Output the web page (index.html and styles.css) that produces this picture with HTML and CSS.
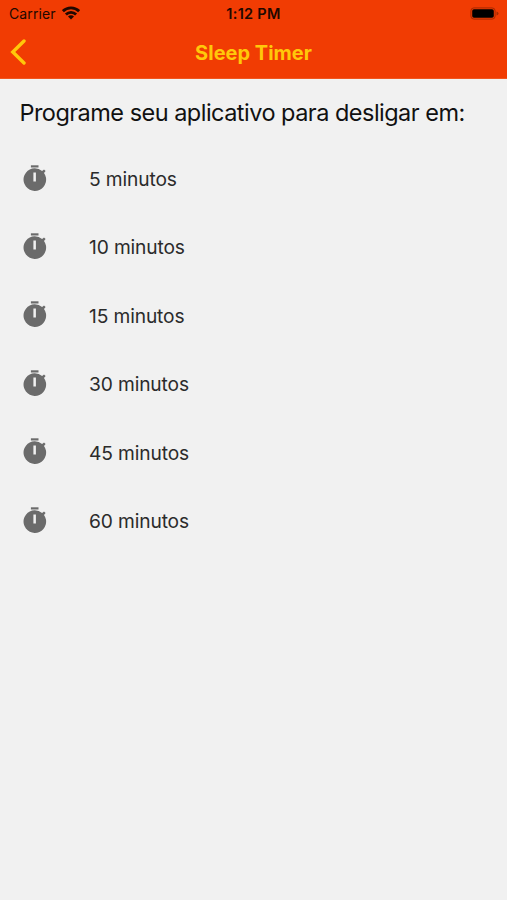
FILE: index.html
```html
<!DOCTYPE html>
<html lang="pt-BR">
<head>
<meta charset="utf-8">
<title>Sleep Timer</title>
<link rel="stylesheet" href="styles.css">
</head>
<body>
<svg class="defs" width="0" height="0" aria-hidden="true">
  <symbol id="stopwatch" viewBox="0 0 24 27">
    <path d="M7.9.3h7.6v2.2H7.9z"/>
    <path fill-rule="evenodd" d="M11.6 3.3a11.2 11.2 0 0 1 7.5 2.7l1.9-1.6 1.6 1.6-1.6 2A11.3 11.3 0 1 1 11.6 3.3zM10.4 7.4v9h2.5v-9z"/>
  </symbol>
</svg>
<header class="header">
  <div class="status">
    <div class="status-left">
      <span class="carrier">Carrier</span>
      <svg class="wifi" viewBox="0 0 18 14">
        <g fill="none" stroke="#210800" stroke-width="2.8">
          <path d="M.9 5.2a11.5 11.5 0 0 1 16.2 0"/>
          <path d="M3.9 8.4a7.2 7.2 0 0 1 10.2 0"/>
        </g>
        <path fill="#210800" d="M9 13.6l-3-3.2a4.2 4.2 0 0 1 6 0z"/>
      </svg>
    </div>
    <span class="clock">1:12 PM</span>
    <svg class="battery" viewBox="0 0 30 13">
      <rect x=".9" y=".9" width="24.2" height="11.2" rx="3" fill="none" stroke="#a62a02" stroke-width="1"/>
      <rect x="2.2" y="2.2" width="21.6" height="8.6" rx="1.8" fill="#000"/>
      <path d="M26.5 4.5q2 .6 2 2t-2 2z" fill="#a62a02"/>
    </svg>
  </div>
  <div class="navbar">
    <svg class="back" viewBox="0 0 16 26"><path d="M14 2 2.8 13 14 24" fill="none" stroke="#ffc80a" stroke-width="3.4" stroke-linecap="round"/></svg>
    <h1 class="title">Sleep Timer</h1>
  </div>
</header>
<main class="content">
  <h2 class="prompt">Programe seu aplicativo para desligar em:</h2>
  <ul class="options">
    <li class="option"><svg class="icon"><use href="#stopwatch"/></svg><span>5 minutos</span></li>
    <li class="option"><svg class="icon"><use href="#stopwatch"/></svg><span>10 minutos</span></li>
    <li class="option"><svg class="icon"><use href="#stopwatch"/></svg><span>15 minutos</span></li>
    <li class="option"><svg class="icon"><use href="#stopwatch"/></svg><span>30 minutos</span></li>
    <li class="option"><svg class="icon"><use href="#stopwatch"/></svg><span>45 minutos</span></li>
    <li class="option"><svg class="icon"><use href="#stopwatch"/></svg><span>60 minutos</span></li>
  </ul>
</main>
</body>
</html>
```
FILE: styles.css
```css
* { box-sizing: border-box; }
body {
  margin: 0;
  min-height: 100vh;
  background: #f1f1f1;
  font-family: Inter, "Liberation Sans", sans-serif;
}
svg { display: block; }
.defs { position: absolute; }
.header { height: 79px; border-bottom: 1px solid #f0561f; background: #f13c03; }
.status {
  display: grid;
  grid-template-columns: 1fr auto 1fr;
  align-items: center;
  height: 27px;
  padding: 0 7px 0 9px;
  color: #210800;
  font-size: 14px;
}
.status-left { display: flex; align-items: center; gap: 6px; }
.carrier { letter-spacing: 0.12px; }
.clock { margin-left: -2px; font-weight: 600; font-size: 14.5px; letter-spacing: 0.3px; }
.wifi { width: 18px; height: 14px; margin-bottom: 2px; }
.battery { width: 30px; height: 13px; justify-self: end; }
.navbar {
  display: grid;
  grid-template-columns: 1fr auto 1fr;
  align-items: center;
  height: 51px;
  padding: 0 11px;
}
.back { width: 16px; height: 26px; margin: 0 0 2px -1px; }
.title { margin: 0; color: #ffc80a; font-size: 20px; font-weight: 700; }
.content { padding: 18px 20px; }
.prompt {
  margin: 0 0 15px -0.6px;
  color: #111;
  font-size: 23.5px;
  font-weight: 400;
  line-height: 32px;
  letter-spacing: -0.52px;
  white-space: nowrap;
}
.options { margin: 0; padding: 0; list-style: none; }
.option {
  display: flex;
  align-items: center;
  gap: 42px;
  height: 68.4px;
  padding-left: 3px;
  color: #2b2b2b;
  font-size: 19.2px;
  letter-spacing: -0.13px;
}
.option span { padding-top: 1.6px; }
.icon { width: 24px; height: 27px; fill: #6b6b6b; }
```
